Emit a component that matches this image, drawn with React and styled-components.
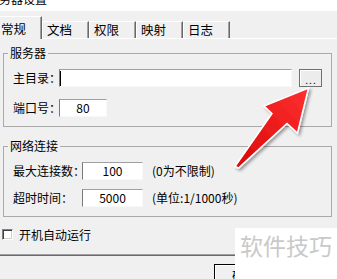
import React from "react";
import styled, { createGlobalStyle } from "styled-components";

const GlobalStyle = createGlobalStyle`
  html, body {
    margin: 0;
    padding: 0;
    background: #f0f0f0;
  }
  body {
    font-family: "Noto Sans CJK SC", "Noto Sans", sans-serif;
    font-size: 12px;
    color: #000;
  }
`;

const Window = styled.div`
  position: relative;
  width: 337px;
  height: 279px;
  overflow: hidden;
  background: #f0f0f0;
`;

const TitleBar = styled.div`
  height: 11px;
  background: #fff;
  overflow: hidden;
`;

const TitleText = styled.div`
  margin: -9px 0 0 -13px;
  line-height: 16px;
  white-space: nowrap;
`;

const TabStrip = styled.div`
  display: flex;
  align-items: flex-end;
  padding-top: 5px;
  margin-left: -6px;
`;

const Tab = styled.div`
  box-sizing: border-box;
  position: relative;
  z-index: ${(p) => (p.$active ? 2 : 0)};
  width: ${(p) => (p.$active ? 48 : 47)}px;
  height: ${(p) => (p.$active ? 23 : 17)}px;
  margin-bottom: ${(p) => (p.$active ? -1 : 0)}px;
  padding: ${(p) => (p.$active ? "4px 0 0 6px" : "0 0 0 4px")};
  border-top: 1px solid #fff;
  border-left: 1px solid #fff;
  border-right: 1px solid #696969;
  box-shadow: inset -1px 0 0 #a0a0a0;
  background: #f0f0f0;
  font-size: 12.5px;
  line-height: 16px;
  white-space: nowrap;
`;

const Panel = styled.div`
  width: 360px;
  margin-left: -3px;
  padding: 7px 0 14px 5px;
  border-top: 1px solid #fff;
  border-left: 1px solid #fff;
  border-bottom: 1px solid #696969;
  box-shadow: inset 0 -1px 0 #a0a0a0;
`;

const Group = styled.fieldset`
  box-sizing: border-box;
  width: 329px;
  margin: ${(p) => (p.$first ? 0 : "12px 0 0")};
  padding: 0;
  border: 1px solid #a9a9a9;
  min-inline-size: 0;
`;

const Legend = styled.legend`
  margin-left: 4px;
  padding: 0 2px;
  line-height: 14px;
`;

const GroupBody = styled.div`
  display: flex;
  flex-direction: column;
  gap: ${(p) => p.$gap}px;
  padding: 9px 0 9px 9px;
`;

const Row = styled.div`
  display: flex;
  align-items: center;
  height: 18px;
`;

const Label = styled.span`
  width: ${(p) => p.$w}px;
  flex-shrink: 0;
  line-height: 16px;
  white-space: nowrap;
`;

const Field = styled.div`
  box-sizing: border-box;
  display: flex;
  align-items: center;
  justify-content: ${(p) => (p.$center ? "center" : "flex-start")};
  width: ${(p) => p.$w}px;
  height: 18px;
  background: #fff;
  border: 1px solid;
  border-color: #a0a0a0 #f8f8f8 #f8f8f8 #7a7a7a;
  font-size: 12px;
  line-height: 16px;
`;

const Caret = styled.span`
  width: 1px;
  height: 15px;
  background: #000;
`;

const BrowseButton = styled.div`
  box-sizing: border-box;
  display: flex;
  align-items: flex-end;
  justify-content: center;
  width: 23px;
  height: 18px;
  margin-left: 7px;
  border: 1px solid #707070;
  background: #ececec;
  box-shadow: inset 1px 1px 0 #fff;
  font-size: 10px;
  line-height: 12px;
  letter-spacing: 1px;
  padding-left: 1px;
`;

const Note = styled.span`
  margin-left: 9px;
  line-height: 16px;
  white-space: nowrap;
`;

const CheckRow = styled.label`
  display: flex;
  align-items: center;
  gap: 6px;
  height: 13px;
  margin: 11px 0 0 -1px;
  line-height: 13px;
`;

const CheckBox = styled.span`
  box-sizing: border-box;
  width: 11px;
  height: 11px;
  background: #fff;
  border: 1px solid;
  border-color: #808080 #fff #fff #808080;
  box-shadow: inset 1px 1px 0 #404040, inset -1px -1px 0 #d4d0c8;
`;

const Footer = styled.div`
  display: flex;
  justify-content: flex-end;
  padding: 8px 63px 0 0;
`;

const Button = styled.div`
  box-sizing: border-box;
  width: 60px;
  height: 23px;
  border: 1px solid #000;
  box-shadow: inset 1px 1px 0 #fff, inset -1px -1px 0 #808080;
  background: #f0f0f0;
  text-align: center;
  line-height: 21px;
`;

const Watermark = styled.div`
  position: absolute;
  left: 235px;
  top: 228px;
  right: 0;
  bottom: 0;
  background: #fff;
  padding: 2px 0 0 5px;
  font-size: 23px;
  line-height: 30px;
  color: #c9c9c9;
  white-space: nowrap;
`;

const ArrowLayer = styled.svg`
  position: absolute;
  left: 0;
  top: 0;
  pointer-events: none;
`;

const tabs = ["常规", "文档", "权限", "映射", "日志"];

export default function App() {
  return (
    <>
      <GlobalStyle />
      <Window>
        <TitleBar>
          <TitleText>服务器设置</TitleText>
        </TitleBar>
        <TabStrip>
          {tabs.map((t, i) => (
            <Tab key={t} $active={i === 0}>
              {t}
            </Tab>
          ))}
        </TabStrip>
        <Panel>
          <Group $first>
            <Legend>服务器</Legend>
            <GroupBody $gap={12}>
              <Row>
                <Label $w={46}>主目录：</Label>
                <Field $w={233}>
                  <Caret />
                </Field>
                <BrowseButton>...</BrowseButton>
              </Row>
              <Row>
                <Label $w={46}>端口号：</Label>
                <Field $w={48} $center>
                  80
                </Field>
              </Row>
            </GroupBody>
          </Group>
          <Group>
            <Legend>网络连接</Legend>
            <GroupBody $gap={9}>
              <Row>
                <Label $w={69}>最大连接数：</Label>
                <Field $w={61} $center>
                  100
                </Field>
                <Note>(0为不限制)</Note>
              </Row>
              <Row>
                <Label $w={69}>超时时间：</Label>
                <Field $w={61} $center>
                  5000
                </Field>
                <Note>(单位:1/1000秒)</Note>
              </Row>
            </GroupBody>
          </Group>
          <CheckRow>
            <CheckBox />
            开机自动运行
          </CheckRow>
        </Panel>
        <Footer>
          <Button>确定</Button>
        </Footer>
        <Watermark>软件技巧</Watermark>
        <ArrowLayer width="337" height="279" viewBox="0 0 337 279">
          <defs>
            <linearGradient id="arrowFill" x1="1" y1="0" x2="0" y2="1">
              <stop offset="0" stopColor="#ff3030" />
              <stop offset="1" stopColor="#d80808" />
            </linearGradient>
            <filter id="arrowShadow" x="-20%" y="-20%" width="140%" height="140%">
              <feDropShadow dx="2" dy="2" stdDeviation="1.5" floodColor="#000" floodOpacity="0.35" />
            </filter>
          </defs>
          <polygon
            points="308.5,88 264,106 272,113.5 235,166.5 238.5,168 287,123.5 297.5,133"
            fill="url(#arrowFill)"
            stroke="#fff"
            strokeWidth="1.5"
            strokeLinejoin="miter"
            filter="url(#arrowShadow)"
          />
        </ArrowLayer>
      </Window>
    </>
  );
}
